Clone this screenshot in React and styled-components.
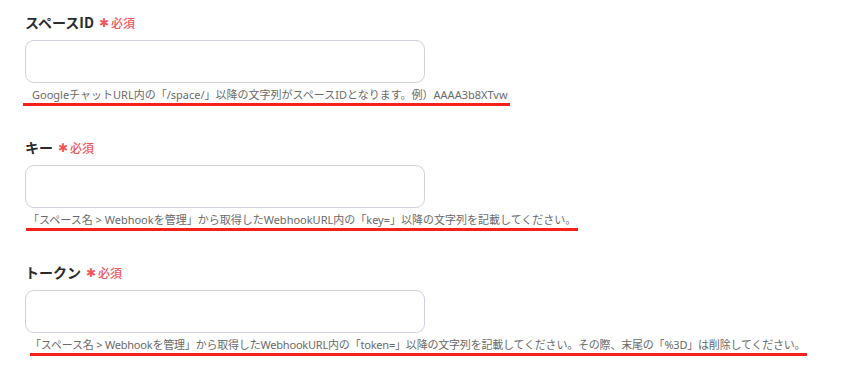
import React from "react";
import styled, { createGlobalStyle } from "styled-components";

const fields = [
  {
    label: "スペースID",
    help: "GoogleチャットURL内の「/space/」以降の文字列がスペースIDとなります。例）AAAA3b8XTvw",
    from: -2,
    start: 7,
    track: 0,
  },
  {
    label: "キー",
    help: "「スペース名 > Webhookを管理」から取得したWebhookURL内の「key=」以降の文字列を記載してください。",
    from: 1,
    start: 3,
    track: 0,
  },
  {
    label: "トークン",
    help: "「スペース名 > Webhookを管理」から取得したWebhookURL内の「token=」以降の文字列を記載してください。その際、末尾の「%3D」は削除してください。",
    from: 5,
    start: 5,
    track: -0.2,
  },
];

const App = () => {
  return (
    <>
      <GlobalStyle />
      <FormWrapper>
        {fields.map((f) => (
          <FieldBlock key={f.label}>
            <LabelRow>
              <LabelText>{f.label}</LabelText>
              <RequiredMark>✱</RequiredMark>
              <RequiredText>必須</RequiredText>
            </LabelRow>
            <TextInput type="text" />
            <HelpRow>
              <HelpText $from={f.from} $start={f.start} $track={f.track}>
                {f.help}
              </HelpText>
            </HelpRow>
          </FieldBlock>
        ))}
      </FormWrapper>
    </>
  );
};

export default App;

const GlobalStyle = createGlobalStyle`
  body {
    margin: 0;
    background: #ffffff;
    font-family: "Noto Sans CJK JP", "Noto Sans", sans-serif;
  }
`;

const FormWrapper = styled.div`
  display: flex;
  flex-direction: column;
  gap: 31px;
  padding: 12px 0 0 25px;
`;

const FieldBlock = styled.div`
  display: flex;
  flex-direction: column;
`;

const LabelRow = styled.div`
  display: flex;
  align-items: center;
  height: 20px;
  margin-bottom: 8px;
`;

const LabelText = styled.span`
  font-size: 14px;
  font-weight: 700;
  color: #2b2b2b;
  margin-right: 5px;
`;

const RequiredMark = styled.span`
  font-family: "DejaVu Sans", sans-serif;
  font-size: 12px;
  color: #f0555a;
  margin-right: 2px;
  padding-top: 2px;
`;

const RequiredText = styled.span`
  font-size: 12px;
  font-weight: 500;
  color: #f0555a;
`;

const TextInput = styled.input`
  box-sizing: border-box;
  width: 400px;
  height: 43px;
  border: 1px solid #cfd2dc;
  border-radius: 9px;
  background: #ffffff;
  outline: none;
`;

const HelpRow = styled.div`
  display: flex;
  margin-top: 4px;
`;

const HelpText = styled.span`
  font-family: "Noto Sans", "Noto Sans CJK JP", sans-serif;
  font-size: 11px;
  line-height: 16px;
  letter-spacing: ${(p) => p.$track}px;
  color: #6a6a6a;
  white-space: nowrap;
  margin-left: ${(p) => p.$from}px;
  padding-left: ${(p) => p.$start - p.$from}px;
  padding-right: 2px;
  border-bottom: 3px solid #f5221b;
`;
